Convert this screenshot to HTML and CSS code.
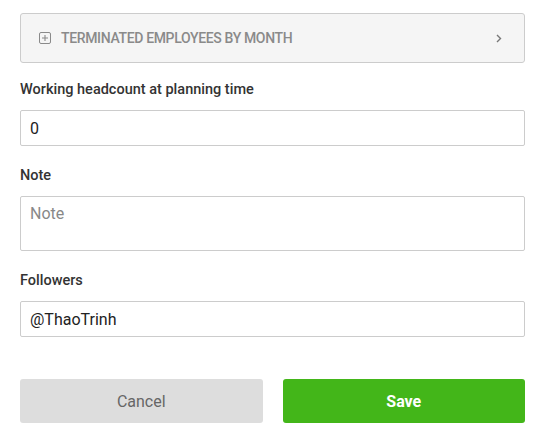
FILE: index.html
```html
<!DOCTYPE html>
<html>
<head>
<meta charset="utf-8">
<link rel="stylesheet" href="styles.css">
</head>
<body>
<div class="form">
  <div class="panel">
    <svg class="plus" width="12" height="12" viewBox="0 0 12 12">
      <rect x="0.5" y="0.5" width="11" height="11" rx="1.5" fill="none" stroke="#8a8a8a" stroke-width="1"/>
      <path d="M6 3v6M3 6h6" stroke="#8a8a8a" stroke-width="1.1" fill="none"/>
    </svg>
    <span class="panel-title">TERMINATED EMPLOYEES BY MONTH</span>
    <svg class="chev" width="6" height="9" viewBox="0 0 6 9">
      <path d="M1 1l3.5 3.5L1 8" stroke="#777" stroke-width="1.4" fill="none"/>
    </svg>
  </div>
  <div class="field">
    <label class="label">Working headcount at planning time</label>
    <input class="input" type="text" value="0">
  </div>
  <div class="field">
    <label class="label">Note</label>
    <textarea class="input textarea" placeholder="Note"></textarea>
  </div>
  <div class="field">
    <label class="label">Followers</label>
    <input class="input" type="text" value="@ThaoTrinh">
  </div>
  <div class="actions">
    <button class="btn cancel">Cancel</button>
    <button class="btn save">Save</button>
  </div>
</div>
</body>
</html>
```
FILE: styles.css
```css
* { box-sizing: border-box; }
html, body { margin: 0; padding: 0; background: #fff; }
body { font-family: Roboto, "Liberation Sans", sans-serif; }
.form { padding: 13px 20px 0 20px; width: 545px; }
.panel {
  height: 50px;
  border: 1px solid #cccccc;
  border-radius: 3px;
  background: #f5f5f5;
  display: flex;
  align-items: center;
  padding: 0 22px 0 18px;
  margin-bottom: 17px;
}
.plus { flex: none; margin-right: 10px; }
.panel-title {
  font-size: 14px;
  font-weight: 500;
  color: #8a8a8a;
  letter-spacing: -0.35px;
  flex: 1;
}
.chev { flex: none; }
.field { display: flex; flex-direction: column; margin-bottom: 20px; }
.label {
  font-size: 14.5px;
  line-height: 20px;
  font-weight: 500;
  color: #333;
  margin-bottom: 10px;
}
.input {
  height: 36px;
  border: 1px solid #cccccc;
  border-radius: 2px;
  padding: 0 9px;
  font-family: Roboto, "Liberation Sans", sans-serif;
  font-size: 16px;
  color: #222;
  background: #fff;
  outline: none;
}
.textarea {
  height: 55px;
  padding: 7px 9px 0 9px;
  resize: none;
  line-height: 19px;
}
.textarea::placeholder { color: #888; }
.actions {
  display: flex;
  gap: 20px;
  margin-top: 42px;
}
.btn {
  flex: 1;
  height: 44px;
  border: none;
  border-radius: 3px;
  font-family: Roboto, "Liberation Sans", sans-serif;
  font-size: 16px;
}
.cancel { background: #dddddd; color: #666; }
.save { background: #43b619; color: #fff; font-weight: 700; }
```
